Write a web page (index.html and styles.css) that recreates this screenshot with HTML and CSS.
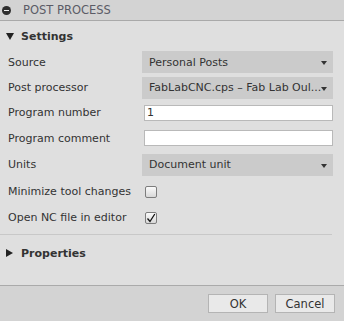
FILE: index.html
```html
<!DOCTYPE html>
<html lang="en">
<head>
  <meta charset="UTF-8">
  <title>Post Process</title>
  <link rel="stylesheet" href="styles.css">
</head>
<body>
  <div class="dialog">
    <header class="titlebar">
      <span class="close-icon"></span>
      <span class="title">POST PROCESS</span>
    </header>

    <main class="content">
      <div class="group-head"><span class="tri-down"></span>Settings</div>

      <div class="form">
        <label>Source</label>
        <div class="select">Personal Posts<span class="arrow"></span></div>

        <label>Post processor</label>
        <div class="select">FabLabCNC.cps &ndash; Fab Lab Oul...<span class="arrow"></span></div>

        <label>Program number</label>
        <div class="input">1</div>

        <label>Program comment</label>
        <div class="input"></div>

        <label>Units</label>
        <div class="select">Document unit<span class="arrow"></span></div>

        <label>Minimize tool changes</label>
        <div><span class="check"></span></div>

        <label>Open NC file in editor</label>
        <div>
          <span class="check">
            <svg width="10" height="10" viewBox="0 0 10 10"><path d="M1.5 5.5 L4 8.5 L8.8 1" fill="none" stroke="#111" stroke-width="1.3"/></svg>
          </span>
        </div>
      </div>

      <div class="divider"></div>

      <div class="group-head props"><span class="tri-right"></span>Properties</div>
    </main>

    <footer class="footer">
      <button class="btn">OK</button>
      <button class="btn">Cancel</button>
    </footer>
  </div>
</body>
</html>
```

FILE: styles.css
```css
body {
  margin: 0;
  font-family: 'DejaVu Sans', sans-serif;
  font-size: 11px;
  color: #333;
  background: #dfdfdf;
}
.dialog {
  width: 344px;
  height: 321px;
  display: flex;
  flex-direction: column;
}
.titlebar {
  height: 20px;
  background: #d3d3d3;
  border-bottom: 1px solid #a9a9a9;
  display: flex;
  align-items: center;
  padding-left: 2px;
}
.close-icon {
  width: 9px;
  height: 9px;
  border-radius: 50%;
  background: #2e2e2e;
  position: relative;
  margin-right: 12px;
}
.close-icon::after {
  content: '';
  position: absolute;
  left: 2px;
  top: 4px;
  width: 5px;
  height: 1px;
  background: #eee;
}
.title { color: #5b5b66; font-size: 11.5px; }
.content { flex: 1; border-bottom: 1px solid #aaa; }
.group-head {
  height: 26px;
  display: flex;
  align-items: center;
  padding-left: 6px;
  font-weight: bold;
  font-size: 11px;
  color: #333;
  margin-top: 2px;
}
.tri-down {
  width: 0; height: 0;
  border-left: 4px solid transparent;
  border-right: 4px solid transparent;
  border-top: 7px solid #222;
  margin-right: 7px;
}
.tri-right {
  width: 0; height: 0;
  border-top: 4px solid transparent;
  border-bottom: 4px solid transparent;
  border-left: 7px solid #222;
  margin-right: 8px;
}
.form {
  display: grid;
  grid-template-columns: 134px 191px;
  grid-template-rows: 26px 25px 25px 26px 27px 26px 26px;
  align-items: center;
  padding-left: 8px;
}
.select {
  height: 22px;
  background: #cbcbcb;
  display: flex;
  align-items: center;
  padding-left: 7px;
  position: relative;
}
.arrow {
  position: absolute;
  right: 6px;
  top: 10px;
  border-left: 3px solid transparent;
  border-right: 3px solid transparent;
  border-top: 4px solid #333;
}
.input {
  height: 14px;
  margin-left: 2px;
  background: #fff;
  border: 1px solid #b9b9b9;
  line-height: 14px;
  padding-left: 2px;
}
.check {
  display: inline-flex;
  align-items: center;
  justify-content: center;
  width: 10px;
  height: 10px;
  margin-left: 3px;
  border: 1px solid #7d7d7d;
  border-radius: 2px;
  background: linear-gradient(#fbfbfb, #d8d8d8);
  vertical-align: middle;
}
.divider {
  height: 1px;
  width: 332px;
  background: #c8c8c8;
  margin-top: 4px;
}
.props { margin-top: 5px; }
.footer {
  height: 35px;
  background: #d3d3d3;
  display: flex;
  justify-content: flex-end;
  align-items: flex-start;
  gap: 7px;
  padding-right: 9px;
  padding-top: 8px;
  box-sizing: border-box;
}
.btn {
  width: 60px;
  height: 19px;
  background: #e9e9e9;
  border: 1px solid #b4b4b4;
  font-family: 'DejaVu Sans', sans-serif;
  font-size: 11.5px;
  color: #333;
  padding: 0;
}
```
